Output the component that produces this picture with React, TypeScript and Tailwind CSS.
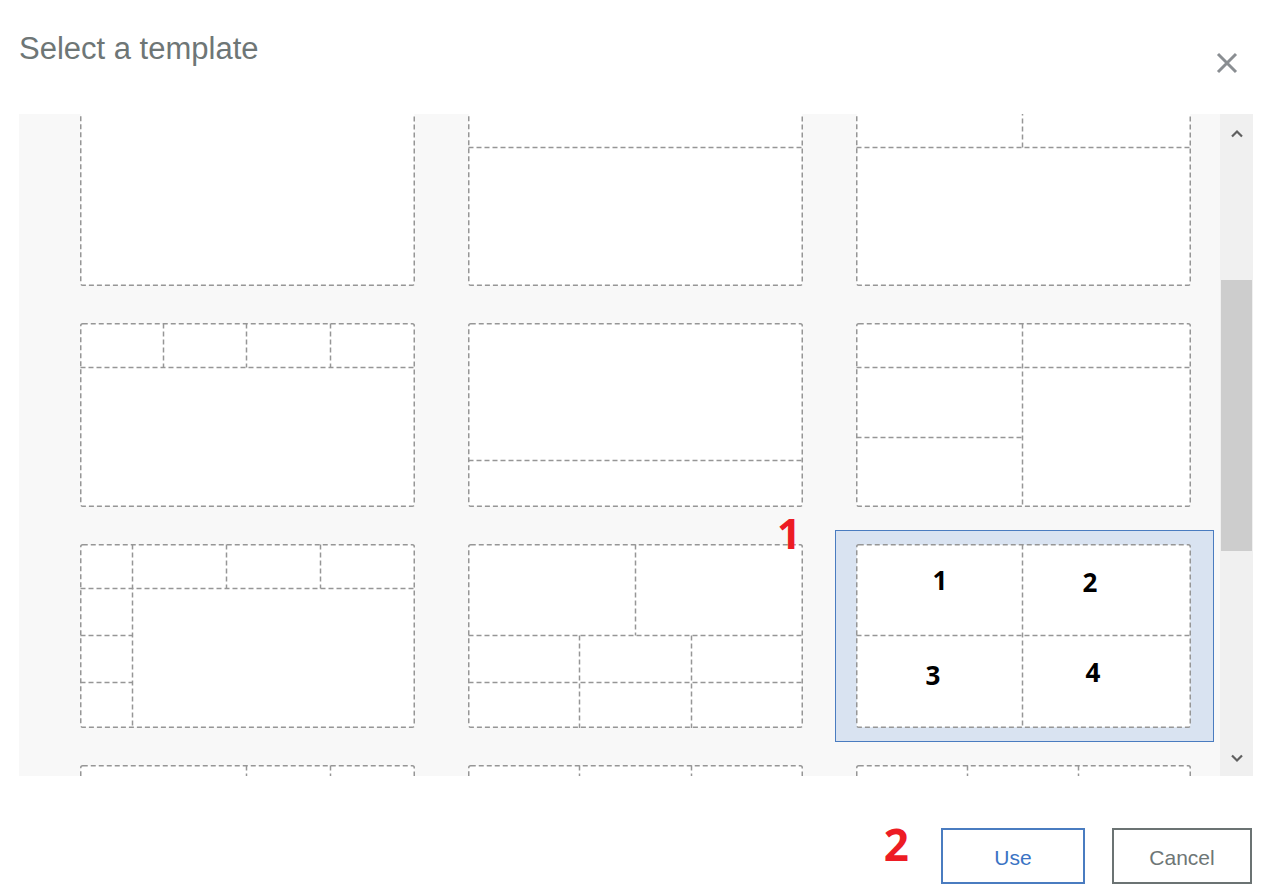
import type { ReactNode } from "react";

type Line = [number, number, number, number];
type Label = { t: string; x: number; y: number };
type Tpl = { lines: Line[]; labels?: Label[]; selected?: boolean };

const W = 335;
const H = 184;

// each thumbnail: inner dividers in card coords (x1, y1, x2, y2)
const templates: Tpl[] = [
  { lines: [] },
  { lines: [[0, 45, W, 45]] },
  { lines: [[0, 45, W, 45], [166, 0, 166, 45]] },

  { lines: [[0, 44, W, 44], [83, 0, 83, 44], [166, 0, 166, 44], [250, 0, 250, 44]] },
  { lines: [[0, 137, W, 137]] },
  { lines: [[0, 44, W, 44], [166, 0, 166, H], [0, 114, 166, 114]] },

  {
    lines: [
      [0, 44, W, 44],
      [52, 0, 52, H],
      [146, 0, 146, 44],
      [240, 0, 240, 44],
      [0, 91, 52, 91],
      [0, 138, 52, 138],
    ],
  },
  {
    lines: [
      [167, 0, 167, 91],
      [0, 91, W, 91],
      [0, 138, W, 138],
      [111, 91, 111, H],
      [223, 91, 223, H],
    ],
  },
  {
    lines: [[166, 0, 166, H], [0, 91, W, 91]],
    labels: [
      { t: "1", x: 84, y: 46 },
      { t: "2", x: 234, y: 48 },
      { t: "3", x: 77, y: 141 },
      { t: "4", x: 237, y: 138 },
    ],
    selected: true,
  },

  { lines: [[0, 44, W, 44], [166, 0, 166, 44], [250, 0, 250, 44]] },
  { lines: [[0, 44, W, 44], [111, 0, 111, 44], [223, 0, 223, 44]] },
  { lines: [[0, 44, W, 44], [111, 0, 111, 44], [222, 0, 222, 44]] },
];

function Thumb({ tpl }: { tpl: Tpl }) {
  return (
    <svg width={W} height={H} viewBox={`0 0 ${W} ${H}`} className="block">
      <rect
        x="0.75"
        y="0.75"
        width={W - 1.5}
        height={H - 1.5}
        rx="2"
        fill="#ffffff"
        stroke="#969696"
        strokeWidth="1.5"
        strokeDasharray="5 3"
      />
      {tpl.lines.map(([x1, y1, x2, y2], i) => (
        <line
          key={i}
          x1={x1 + 0.5}
          y1={y1 + 0.5}
          x2={x2 + 0.5}
          y2={y2 + 0.5}
          stroke="#969696"
          strokeWidth="1.5"
          strokeDasharray="5 3"
        />
      ))}
      {tpl.labels?.map((l) => (
        <text
          key={l.t}
          x={l.x}
          y={l.y}
          textAnchor="middle"
          fontFamily="'Open Sans', sans-serif"
          fontWeight="700"
          fontSize="26"
          fill="#000000"
        >
          {l.t}
        </text>
      ))}
    </svg>
  );
}

function Chevron({ up }: { up?: boolean }): ReactNode {
  return (
    <svg width="14" height="9" viewBox="0 0 14 9">
      <path
        d={up ? "M2 7.5 L7 2.5 L12 7.5" : "M2 1.5 L7 6.5 L12 1.5"}
        fill="none"
        stroke="#5f5f5f"
        strokeWidth="2.2"
      />
    </svg>
  );
}

export default function App() {
  return (
    <div className="flex h-[891px] w-[1269px] flex-col overflow-hidden bg-white font-['Liberation_Sans',Arial,sans-serif]">
      <header className="flex h-[114px] shrink-0 items-start justify-between pl-[19px] pr-[31px]">
        <h1 className="pt-[31px] text-[31px] leading-[36px] font-normal text-[#6e7676]">
          Select a template
        </h1>
        <button className="mt-[52px] h-[22px] w-[22px]" aria-label="Close">
          <svg width="22" height="22" viewBox="0 0 22 22">
            <path d="M2 2 L20 20 M20 2 L2 20" stroke="#8a8e92" strokeWidth="3" />
          </svg>
        </button>
      </header>

      <div className="ml-[19px] mr-[16px] flex h-[662px] shrink-0 bg-[#f8f8f8]">
        <div className="relative flex-1 overflow-hidden">
          <div className="-mt-[26px] grid grid-cols-[379px_379px_379px] gap-[9px] pl-[40px]">
            {templates.map((tpl, i) => (
              <div
                key={i}
                className={
                  tpl.selected
                    ? "border border-[#4a7cc0] bg-[#d9e3f1] pb-[13px] pl-[20px] pr-[22px] pt-[13px]"
                    : "pb-[14px] pl-[21px] pr-[23px] pt-[14px]"
                }
              >
                <Thumb tpl={tpl} />
              </div>
            ))}
          </div>
          <span className="absolute left-[758px] top-[391px] font-['Open_Sans',sans-serif] text-[42px] leading-[56px] font-bold text-[#ed1c24]">
            1
          </span>
        </div>
        <div className="flex w-[33px] shrink-0 flex-col bg-[#f0f0f0]">
          <div className="flex h-[38px] items-center justify-center pt-[1px]">
            <Chevron up />
          </div>
          <div className="ml-[1px] mr-[1px] mt-[128px] h-[271px] bg-[#cdcdcd]" />
          <div className="flex-1" />
          <div className="flex h-[34px] items-center justify-center pb-[2px]">
            <Chevron />
          </div>
        </div>
      </div>

      <footer className="flex items-start justify-end pr-[17px] pt-[52px]">
        <span className="-mt-[14px] mr-[32px] font-['Open_Sans',sans-serif] text-[44px] leading-[60px] font-bold text-[#ed1c24]">
          2
        </span>
        <button className="h-[56px] w-[144px] border-2 border-[#4a7cc0] pt-[3px] text-[21px] text-[#3b73c4]">
          Use
        </button>
        <button className="ml-[27px] h-[56px] w-[140px] border-2 border-[#6b7373] pt-[3px] text-[21px] text-[#6e7676]">
          Cancel
        </button>
      </footer>
    </div>
  );
}
